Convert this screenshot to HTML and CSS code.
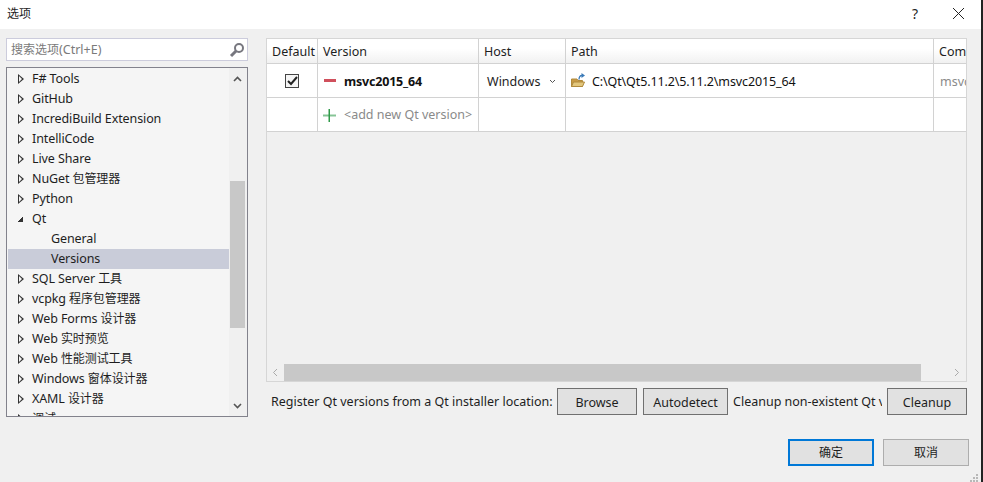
FILE: index.html
```html
<!DOCTYPE html>
<html lang="zh">
<head>
<meta charset="utf-8">
<title>选项</title>
<link rel="stylesheet" href="styles.css">
</head>
<body>
<div class="dialog">
  <header class="titlebar">
    <span class="title cjk">选项</span>
    <span class="help">?</span>
    <svg class="close" width="13" height="13" viewBox="0 0 13 13"><path d="M1 1l11 11M12 1L1 12" stroke="#222" fill="none"/></svg>
  </header>
  <main class="body">
    <aside class="left">
      <div class="search">
        <span class="search-text"><span class="cjk">搜索选项</span>(Ctrl+E)</span>
        <svg width="16" height="16" viewBox="0 0 16 16"><circle cx="10" cy="6" r="4" fill="none" stroke="#77777f" stroke-width="2"/><path d="M7 9l-5 5" stroke="#77777f" stroke-width="3"/></svg>
      </div>
      <div class="tree">
        <ul class="rows">
          <li class="row"><i class="tri"></i>F# Tools</li>
          <li class="row"><i class="tri"></i>GitHub</li>
          <li class="row"><i class="tri"></i>IncrediBuild Extension</li>
          <li class="row"><i class="tri"></i>IntelliCode</li>
          <li class="row"><i class="tri"></i>Live Share</li>
          <li class="row"><i class="tri"></i>NuGet <span class="cjk">包管理器</span></li>
          <li class="row"><i class="tri"></i>Python</li>
          <li class="row"><i class="tri open"></i>Qt</li>
          <li class="row child">General</li>
          <li class="row child selected">Versions</li>
          <li class="row"><i class="tri"></i>SQL Server <span class="cjk">工具</span></li>
          <li class="row"><i class="tri"></i>vcpkg <span class="cjk">程序包管理器</span></li>
          <li class="row"><i class="tri"></i>Web Forms <span class="cjk">设计器</span></li>
          <li class="row"><i class="tri"></i>Web <span class="cjk">实时预览</span></li>
          <li class="row"><i class="tri"></i>Web <span class="cjk">性能测试工具</span></li>
          <li class="row"><i class="tri"></i>Windows <span class="cjk">窗体设计器</span></li>
          <li class="row"><i class="tri"></i>XAML <span class="cjk">设计器</span></li>
          <li class="row"><i class="tri"></i><span class="cjk">调试</span></li>
        </ul>
        <div class="vscroll">
          <svg class="arrow" width="9" height="6" viewBox="0 0 9 6"><path d="M1 5l3.500-3.500L8 5" fill="none" stroke="#555" stroke-width="1.600"/></svg>
          <div class="vthumb"></div>
          <svg class="arrow" width="9" height="6" viewBox="0 0 9 6"><path d="M1 1l3.500 3.500L8 1" fill="none" stroke="#555" stroke-width="1.600"/></svg>
        </div>
      </div>
    </aside>
    <section class="right">
      <div class="tablebox">
        <div class="table">
          <div class="grid head">
            <div class="cell">Default</div>
            <div class="cell">Version</div>
            <div class="cell">Host</div>
            <div class="cell">Path</div>
            <div class="cell last">Com</div>
          </div>
          <div class="grid data first-row">
            <div class="cell center"><span class="check"><svg width="11" height="10" viewBox="0 0 11 10"><path d="M1 5l3 3 6-7" fill="none" stroke="#222" stroke-width="2"/></svg></span></div>
            <div class="cell version"><i class="minus"></i><b class="name">msvc2015_64</b></div>
            <div class="cell host"><span>Windows</span><svg width="7" height="5" viewBox="0 0 7 5"><path d="M1 1l2.500 2.500L6 1" fill="none" stroke="#555"/></svg></div>
            <div class="cell path">
              <svg class="folder" width="16" height="16" viewBox="0 0 16 16"><path d="M1.500 7V14.500H12.500V8.500H8L7 7z" fill="#c89a44" stroke="#b08a3c"/><path d="M1.500 14.500L3.500 10H14.500L12.500 14.500z" fill="#e2c67c" stroke="#b08a3c"/><path d="M9 7.500C9 5 10 3.500 12 3.500" fill="none" stroke="#3a7ab8" stroke-width="1.300"/><path d="M11.500 1l3.500 2.500-3.500 2.500z" fill="#3a7ab8"/></svg>
              <span>C:\Qt\Qt5.11.2\5.11.2\msvc2015_64</span>
            </div>
            <div class="cell last muted">msvc2015_64</div>
          </div>
          <div class="grid data">
            <div class="cell"></div>
            <div class="cell"><svg class="plus" width="13" height="13" viewBox="0 0 13 13"><path d="M0 5.500h13v2H0z" fill="#86c496"/><path d="M5.500 0h1.500v13H5.500z" fill="#2f9a48"/></svg><span class="addtext">&lt;add new Qt version&gt;</span></div>
            <div class="cell"></div>
            <div class="cell"></div>
            <div class="cell last"></div>
          </div>
        </div>
        <div class="hscroll">
          <svg class="harrow" width="6" height="9" viewBox="0 0 6 9"><path d="M5 1L1.500 4.500 5 8" fill="none" stroke="#aaa"/></svg>
          <div class="hthumb"></div>
          <svg class="harrow" width="6" height="9" viewBox="0 0 6 9"><path d="M1 1l3.500 3.500L1 8" fill="none" stroke="#aaa"/></svg>
        </div>
      </div>
      <div class="actions">
        <span class="label first">Register Qt versions from a Qt installer location:</span>
        <button class="btn">Browse</button>
        <button class="btn auto">Autodetect</button>
        <span class="label clip">Cleanup non-existent Qt versions</span>
        <button class="btn last">Cleanup</button>
      </div>
    </section>
  </main>
  <footer class="footer">
    <button class="dlg primary cjk">确定</button>
    <button class="dlg cjk">取消</button>
  </footer>
  <svg class="grip" width="8" height="8" viewBox="0 0 8 8"><path d="M6 0h2v2H6zM3 3h2v2H3zM6 3h2v2H6zM0 6h2v2H0zM3 6h2v2H3zM6 6h2v2H6z" fill="#b8b8b8"/></svg>
</div>
</body>
</html>
```
FILE: styles.css
```css
* { box-sizing: border-box; }
html, body { margin: 0; height: 100%; background: #222; overflow: hidden; }
body { font: 12.5px/20px "Noto Sans", "Noto Sans CJK SC", sans-serif; color: #1e1e1e; }
ul { list-style: none; margin: 0; padding: 0; }
.cjk { font-size: 12px; }
.dialog { position: relative; width: 981px; height: 482px; background: #f0f0f0; display: flex; flex-direction: column; }
.titlebar { height: 29px; background: #fff; display: flex; align-items: center; padding: 0 16px 2px 7px; flex: none; }
.title { flex: 1; }
.help { margin-right: 34px; font-size: 14px; }
.body { display: flex; height: 389px; padding: 9px 0 0 6px; flex: none; }
.left { width: 242px; margin-right: 18px; flex: none; }
.search { height: 23px; background: #fff; border: 1px solid #ccccdc; display: flex; align-items: center; justify-content: space-between; padding: 0 2px 0 4px; color: #7a7a7a; margin-bottom: 6px; }
.tree { height: 350px; border: 1px solid #82828c; background: #f5f5f5; display: flex; overflow: hidden; }
.rows { flex: 1; padding: 1px 0 0 1px; overflow: hidden; }
.row { height: 20px; display: flex; align-items: center; white-space: pre; padding: 0 0 0 10px; letter-spacing: -0.1px; }
.tri { width: 0; height: 0; border-left: 6px solid #333; border-top: 5px solid transparent; border-bottom: 5px solid transparent; margin-right: 8px; position: relative; }
.tri::after { content: ""; position: absolute; left: -5px; top: -3px; width: 0; height: 0; border-left: 3.500px solid #f5f5f5; border-top: 3px solid transparent; border-bottom: 3px solid transparent; }
.tri.open { border: 0; width: 6px; height: 6px; background: linear-gradient(135deg, transparent 50%, #333 50%); margin: 0 9px 0 -1px; }
.tri.open::after { display: none; }
.child { padding-left: 43px; }
.selected { background: #c9ccd9; }
.vscroll { width: 18px; background: #f0f0f0; display: flex; flex-direction: column; align-items: center; padding: 8px 2px 0 1px; flex: none; }
.arrow { flex: none; }
.vthumb { width: 15px; height: 147px; background: #c8c8c8; margin: 99px 0 75px; flex: none; }
.right { width: 701px; flex: none; }
.tablebox { height: 344px; border: 1px solid #d6d6d6; display: flex; flex-direction: column; justify-content: space-between; }
.table { overflow: hidden; }
.grid { display: grid; grid-template-columns: 51px 161px 87px 368px 32px; }
.cell { display: flex; align-items: center; white-space: nowrap; overflow: hidden; border-right: 1px solid #d2d2d2; border-bottom: 1px solid #d2d2d2; padding-left: 5px; padding-top: 1px; }
.cell.last { border-right: 0; }
.head { height: 25px; }
.head .cell { background: linear-gradient(#fff 0, #fff 40%, #f1f1f1 100%); }
.data { height: 34px; background: #fff; }
.first-row .cell { padding-top: 2px; }
.first-row .center { justify-content: center; padding: 0; }
.check { width: 14px; height: 14px; border: 1px solid #444; display: flex; align-items: center; justify-content: center; background: #f5f5f5; }
.version { padding-left: 6px; }
.minus { width: 12px; height: 3px; background: #d0505c; margin: -2px 8px 0 0; flex: none; }
.name { font-weight: 700; color: #111; letter-spacing: -0.2px; }
.host { padding-left: 8px; gap: 9px; }
.path { padding-left: 4px; gap: 6px; color: #111; letter-spacing: -0.12px; }
.folder { flex: none; margin-top: -4px; }
.muted { color: #8a8a8a; padding-left: 6px; }
.plus { flex: none; }
.addtext { color: #8a8a8a; margin-left: 8px; }
.hscroll { height: 17px; display: flex; align-items: center; background: #f0f0f0; }
.harrow { margin: 0 6px; flex: none; }
.hscroll .harrow:first-child { margin: 0 6px 0 5px; }
.hthumb { flex: 1; height: 17px; background: #c8c8c8; margin-right: 27px; }
.actions { display: flex; align-items: center; padding: 6px 0 0 5px; }
.label { white-space: nowrap; margin-right: 5px; flex: none; padding-top: 1px; }
.first { width: 281px; }
.clip { width: 149px; overflow: hidden; }
.btn { width: 80px; height: 27px; font: inherit; color: inherit; background: #e1e1e1; border: 1px solid #707070; padding: 2px 0 0; margin-right: 6px; flex: none; }
.btn.auto { width: 85px; margin-right: 5px; }
.btn.last { margin-right: 0; }
.footer { display: flex; justify-content: flex-end; padding: 21px 12px 0 0; gap: 9px; flex: 1; }
.dlg { width: 86px; height: 27px; font-family: inherit; color: inherit; background: #e1e1e1; border: 1px solid #adadad; padding: 0 0 1px; }
.primary { border: 2px solid #0078d7; }
.grip { position: absolute; right: 3px; bottom: 0; }
```
